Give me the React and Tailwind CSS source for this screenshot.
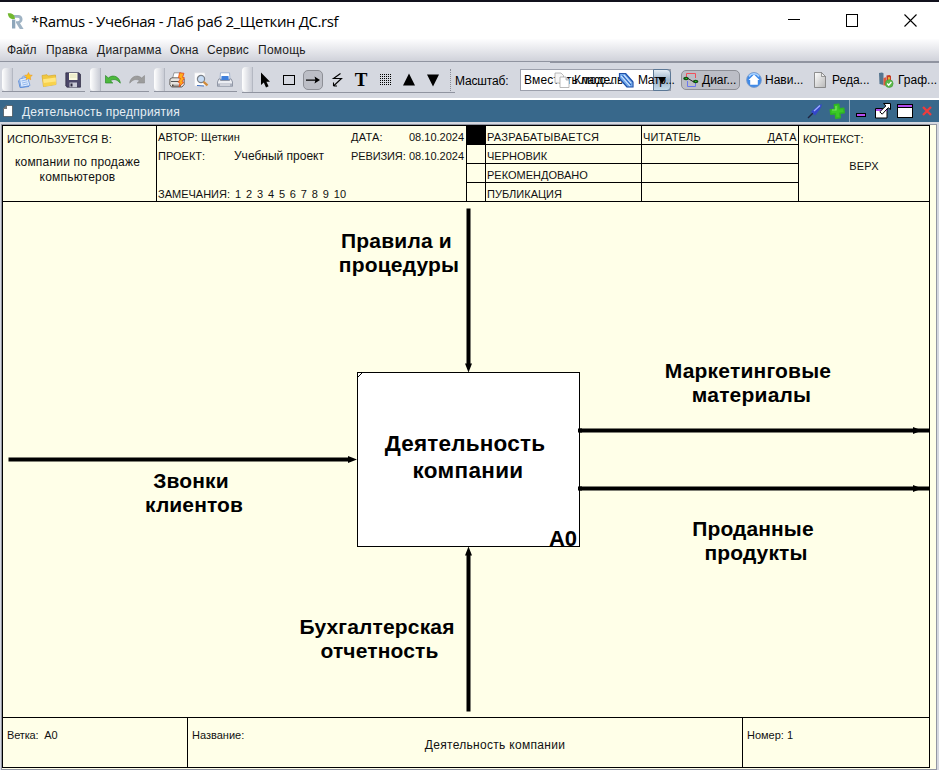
import React from "react";

const Icon = ({ w = 16, h = 16, className = "", children }) => (
  <svg width={w} height={h} viewBox={`0 0 ${w} ${h}`} className={`shrink-0 ${className}`}>
    {children}
  </svg>
);

const crisp = { shapeRendering: "crispEdges" };

/* ---------- title bar ---------- */

function RamusLogo() {
  return (
    <Icon w={18} h={18} className="ml-[7px]">
      <path d="M6 3h5.500a4.300 4.300 0 0 1 1.500 8.200l3.600 5.800h-3.800L9 10.800V9.200h2a1.700 1.700 0 0 0 0-3.400H8z" fill="#9fb3c4" />
      <path d="M5 7.500h3.300v9H5z" fill="#8ea6ba" />
      <path d="M.8 1.200C4.500.8 7.800 2 8 6.800 4.500 7.800 1.300 6.300.8 1.200z" fill="#72b830" />
    </Icon>
  );
}

function TitleBar() {
  return (
    <div className="flex h-[37px] items-center bg-white">
      <RamusLogo />
      <span className="ml-[6px] w-[600px] font-['Open_Sans','Noto_Sans',sans-serif] text-[15px] leading-5 tracking-[-0.4px] text-black">
        *Ramus - Учебная - Лаб раб 2_Щеткин ДС.rsf
      </span>
      <div className="ml-auto flex items-center gap-[46px] pr-[22px]">
        <Icon w={12} h={13}><path d="M0 5.500h12" stroke="#000" {...crisp} /></Icon>
        <Icon w={12} h={13}><path d="M.5.5h11v11.500H.5z" fill="none" stroke="#000" {...crisp} /></Icon>
        <Icon w={13} h={13}><path d="M.5.5l12 12M12.500.5l-12 12" stroke="#000" strokeWidth="1.100" /></Icon>
      </div>
    </div>
  );
}

/* ---------- menu ---------- */

function MenuBar() {
  return (
    <div className="flex h-[23px] items-center border-b border-[#9094a0] bg-linear-to-b from-[#fdfdfe] to-[#d0d2da] pl-[7px] text-xs leading-4 text-[#1c1c1c]">
      <span className="w-[39px]">Файл</span>
      <span className="w-[51px] tracking-[0.2px]">Правка</span>
      <span className="w-[73px] tracking-[0.25px]">Диаграмма</span>
      <span className="w-[37px] tracking-[0.2px]">Окна</span>
      <span className="w-[51px] tracking-[0.15px]">Сервис</span>
      <span className="tracking-[0.25px]">Помощь</span>
    </div>
  );
}

/* ---------- toolbar icons ---------- */

const NewIcon = () => (
  <Icon>
    <path d="M2.500 7l8-2 2.500 8.500-9 2z" fill="#dcebff" stroke="#7fa6e0" />
    <path d="M1.500 8.500l1.500 7 9-1" fill="none" stroke="#5d8edb" />
    <path d="M4.500 9l5.500-1.200M5 11l5.500-1.200M5.500 13l5.500-1.200" stroke="#8db2ea" strokeWidth=".9" />
    <path d="M5 6.500c0-3 3-3 3.500-.8" fill="none" stroke="#6f9ee6" />
    <path d="M11.500.5l1 2.400 2.800.4-2 1.800.4 2.600-2.300-1.200-2.400 1.200.5-2.600-1.900-1.800 2.700-.4z" fill="#ffc41f" stroke="#e8901c" strokeWidth=".5" />
  </Icon>
);
const FolderIcon = () => (
  <Icon>
    <path d="M1 3.500l5-.8 1.200 1.300 7.300-1 .5 9.500-12.500 2z" fill="#f0c840" stroke="#d9a928" strokeWidth=".7" />
    <path d="M2 7.200l12.800-1.700.2 6.800-12 2z" fill="#ffe680" />
    <path d="M2.500 11l12.300-1.500.2 3-12.300 2z" fill="#f8d24c" />
  </Icon>
);
const SaveIcon = () => (
  <Icon>
    <path d="M.8.800h13l1.700 1.500v12.900H2L.8 14z" fill="#4a4668" stroke="#2c2940" strokeWidth=".7" />
    <path d="M4 1h8.500v7H4z" fill="#fbfade" />
    <path d="M5 3h6.500M5 5h6.500" stroke="#dad9b0" strokeWidth=".8" />
    <path d="M4.500 10.500h7.500v4.700H4.500z" fill="#c9c9d6" />
    <path d="M5.500 11.500h2v3h-2z" fill="#2c2940" />
  </Icon>
);
const UndoIcon = () => (
  <Icon>
    <path d="M.5 3.500v7.500h7.300L5.500 8.800c3-2.300 6.500-1.500 9.800 2.400C15 5.500 8.500 1.500 3.300 6z" fill="#4cb93c" stroke="#2d8a2b" strokeWidth=".7" />
  </Icon>
);
const RedoIcon = () => (
  <Icon>
    <path d="M15.500 3.500v7.500H8.200l2.300-2.200C7.500 6.500 4 7.300.7 11.200 1 5.500 7.500 1.500 12.700 6z" fill="#9c9c9c" stroke="#8a8a8a" strokeWidth=".6" />
  </Icon>
);
const PrintBoltIcon = () => (
  <Icon>
    <path d="M5 .8h7l-1 6H3.500z" fill="#fff" stroke="#777" strokeWidth=".7" />
    <path d="M1 7l2-1.200h10.500L15.200 7v5.500L13 15H2.500L.8 12.500z" fill="#e6e3de" stroke="#4a4540" strokeWidth=".8" />
    <path d="M2 9.500h9" stroke="#555" />
    <path d="M3 12.500h9v2H3z" fill="#4a4038" />
    <path d="M4.500 12.500h6v1h-6z" fill="#fff" />
    <path d="M10.500.8l4.500.5-1.500 4 2 .5-2.500 4 1.800.5-4.800 4.500 1-4-1.700-.5L11.500 6.500l-2-.7z" fill="#ffae1a" stroke="#e5431d" strokeWidth=".8" />
  </Icon>
);
const PreviewIcon = () => (
  <Icon>
    <path d="M1.500.8h10l.5.7V14H1.500z" fill="#fdfdfd" stroke="#dcdde2" strokeWidth=".6" />
    <circle cx="8" cy="7" r="3.600" fill="#c6dcf5" stroke="#7a8088" strokeWidth="1.200" />
    <path d="M10.500 9.800l4 3.500" stroke="#d08a3a" strokeWidth="2.200" />
    <path d="M4 13.500l7 .5" stroke="#3d6fc0" />
  </Icon>
);
const PrintIcon = () => (
  <Icon>
    <path d="M3.500.8h9l.5 7H3z" fill="#fff" stroke="#8fa6c8" strokeWidth=".8" />
    <path d="M4.500 4h7l.3 4H4.200z" fill="#3f80dc" />
    <path d="M1.800 7h1.700v1.500h9V7h1.700l1.300 3v4.300H.5V10z" fill="#eceef3" stroke="#7c8494" strokeWidth=".8" />
    <path d="M1 11.500h14v3H1z" fill="#a9afbd" />
    <path d="M3 13h10" stroke="#f5f5f8" />
  </Icon>
);
const CursorIcon = () => (
  <Icon><path d="M4 .5v12.500l2.800-2.600L9 15.500l2.600-1.200-2.200-4.600H13z" fill="#000" /></Icon>
);
const RectIcon = () => (
  <Icon><path d="M2.500 3.500h11v9h-11z" fill="none" stroke="#000" {...crisp} /></Icon>
);
const ArrowIcon = () => (
  <Icon><path d="M1 7.500h10v1.200H1zM9.500 4.500L15 8l-5.500 3.600L10.500 8z" fill="#000" /></Icon>
);
const BoltIcon = () => (
  <Icon><path d="M11.500 1.500L4.500 6.500h8L4.500 14M4.500 14v-3.500M4.500 14h3.500" fill="none" stroke="#000" strokeWidth="1.100" /></Icon>
);
const GridIcon = () => (
  <Icon>
    {[3, 5, 7, 9, 11, 13].map((y) => (
      <path key={y} d={`M3 ${y - 0.5}h11`} stroke="#000" strokeDasharray="1 1" {...crisp} />
    ))}
  </Icon>
);
const UpIcon = () => <Icon><path d="M8 1.500l6 12H2z" fill="#000" /></Icon>;
const DownIcon = () => <Icon><path d="M2 2.500h12l-6 12z" fill="#000" /></Icon>;

const Cell = ({ children }) => <span className="flex w-6 justify-center self-start pt-[4px]">{children}</span>;
const Handle = () => (
  <span className="w-[11px] self-stretch rounded-l-[4px] border-r border-[#b4b8c2] bg-linear-to-r from-white to-[#c9ccd5]" />
);
const Group = ({ children }) => (
  <div className="flex h-6 items-center border-b border-[#9094a0]">
    <Handle />
    {children}
  </div>
);

function PagesIcon() {
  return (
    <Icon w={16} h={16}>
      <path d="M1 1h6l2.500 2.500V11H1z" fill="#f6f6f6" stroke="#a8a8a8" strokeWidth=".8" />
      <path d="M6 5h6l3 3v7.500H6z" fill="#fff" stroke="#a8a8a8" strokeWidth=".8" />
      <path d="M12 5v3h3" fill="#ddd" stroke="#a8a8a8" strokeWidth=".8" />
    </Icon>
  );
}
function ClipIcon() {
  return (
    <Icon w={16} h={16}>
      <path d="M1 1.500l7-.5 7 8-.5 6-6 .3L1 7z" fill="#6fa8ea" />
      <path d="M1.500 6.500v-5h6l7.500 8.500v5h-6z" fill="none" stroke="#1f4fa8" strokeWidth="1.200" />
      <path d="M3 4l9 10M6 3l7 8" stroke="#dbeaff" strokeWidth="1.100" />
      <path d="M4.500 3.500l8.500 9.500" stroke="#2458b8" />
    </Icon>
  );
}
function SchemeIcon() {
  return (
    <Icon w={16} h={16}>
      <path d="M3.500 5V1.500h9V6" fill="none" stroke="#f0505a" />
      <path d="M12.500 10v4.500h-8V9" fill="none" stroke="#6a78f0" />
      <path d="M5 6.500l5 3" stroke="#222" />
      <ellipse cx="3" cy="6.500" rx="2.800" ry="1.700" fill="#124d12" />
      <ellipse cx="12.600" cy="9.500" rx="2.800" ry="1.700" fill="#124d12" />
      <path d="M2.500 6.500h1.500M12 9.500h1.500" stroke="#27d427" />
    </Icon>
  );
}
function HomeIcon() {
  return (
    <Icon w={16} h={16}>
      <circle cx="8" cy="8" r="7.400" fill="#3f8ae8" stroke="#7d9cc8" strokeWidth=".9" />
      <path d="M3 4.500a6 6 0 0 1 10 0" fill="none" stroke="#a9d2ff" strokeWidth="1.500" />
      <path d="M8 2.500L13.500 8h-1.700v4.700H4.200V8H2.500z" fill="#fff" />
    </Icon>
  );
}
function SheetIcon() {
  return (
    <Icon w={14} h={16}>
      <defs>
        <linearGradient id="sheet" x1="0" x2="1" y1="0" y2="1">
          <stop offset="0" stopColor="#fff" /><stop offset="1" stopColor="#b8b8b8" />
        </linearGradient>
      </defs>
      <path d="M1.500.5h7l4 4v11h-11z" fill="url(#sheet)" stroke="#777" strokeWidth=".8" />
      <path d="M8.500.5v4h4z" fill="#eee" stroke="#777" strokeWidth=".7" />
    </Icon>
  );
}
function ChartIcon() {
  return (
    <Icon w={16} h={16}>
      <path d="M1 1l3-.5 1.500.8V13L1.500 12z" fill="#55758f" />
      <path d="M5.500 6l2.500-.8V13.500H5.500z" fill="#e05a3a" />
      <path d="M8.500 3.500l3-.6 1.500 1V10l-4.500 3z" fill="#c63a24" />
      <path d="M10 5l2 .2v4l-2 .5z" fill="#f0a838" />
      <circle cx="11.200" cy="11.600" r="3.900" fill="#5cb848" stroke="#3f9a35" strokeWidth=".6" />
      <path d="M9.200 11.500l1.500 1.700 2.700-3.200" fill="none" stroke="#fff" strokeWidth="1.300" />
    </Icon>
  );
}

function ToolBar() {
  return (
    <div className="relative flex h-9 items-start bg-[#d5d8e0] text-xs leading-4 text-black">
      <div className="flex h-9 items-start gap-[5px] pl-[2px] pt-[6px]">
        <Group>
          <Cell><NewIcon /></Cell>
          <Cell><FolderIcon /></Cell>
          <Cell><SaveIcon /></Cell>
        </Group>
        <Group>
          <Cell><UndoIcon /></Cell>
          <Cell><RedoIcon /></Cell>
        </Group>
        <Group>
          <Cell><PrintBoltIcon /></Cell>
          <Cell><PreviewIcon /></Cell>
          <Cell><PrintIcon /></Cell>
        </Group>
        <div className="-mt-px flex h-[26px] w-[213px] border-b border-[#9094a0]">
          <Handle />
          <div className="mt-px flex h-6 items-start">
            <Cell><CursorIcon /></Cell>
            <Cell><RectIcon /></Cell>
            <span className="mx-[2px] mt-[2px] flex h-5 w-5 items-center justify-center rounded-[5px] border border-[#8d8f96] bg-[#bcbec6]"><ArrowIcon /></span>
            <Cell><BoltIcon /></Cell>
            <Cell><b className="font-['Liberation_Serif',serif] text-[19px] leading-4">T</b></Cell>
            <Cell><GridIcon /></Cell>
            <Cell><UpIcon /></Cell>
            <Cell><DownIcon /></Cell>
            <span className="ml-[5px] mt-px h-[22px] border-l border-dotted border-[#8b8e98]" />
          </div>
        </div>
      </div>
      <span className="mt-[11px] w-[65px] tracking-[-0.15px]">Масштаб:</span>
      <div className="mt-[7px] flex h-[22px] w-[151px] items-center border border-[#9ca0ac] bg-white pl-[3px]">
        <span className="w-[129px] whitespace-nowrap tracking-[0.15px]">Вместить модель</span>
        <span className="-mr-px flex h-[22px] w-[18px] items-center justify-center rounded-r-[4px] border border-[#5c7896] bg-linear-to-b from-[#e4edf5] via-[#9bb3c9] to-[#c5dbea]">
          <svg width="8" height="8"><path d="M0 1h8L4 8z" fill="#000" /></svg>
        </span>
      </div>

      {/* view switcher floats over the zoom selector */}
      <div className="absolute left-[550px] top-0 flex h-[29px] w-[389px] items-center whitespace-nowrap border-t border-[#9094a0] pl-[4px] pt-[6px]">
        <PagesIcon />
        <span className="ml-[4px] w-[44px] tracking-[-0.3px]">Класс...</span>
        <ClipIcon />
        <span className="ml-[4px] w-[43px] tracking-[-0.3px]">Матр...</span>
        <span className="flex h-5 w-[59px] items-center gap-[3px] rounded-[5px] border border-[#8d8f96] bg-[#bcbec6] pl-[1px]">
          <SchemeIcon />Диаг...
        </span>
        <span className="ml-[6px] flex w-[67px] items-center gap-[3px]"><HomeIcon />Нави...</span>
        <span className="flex w-[65px] items-center gap-[5px]"><SheetIcon />Реда...</span>
        <span className="flex items-center gap-[4px]"><ChartIcon />Граф...</span>
      </div>
    </div>
  );
}

/* ---------- diagram window ---------- */

function WindowHeader() {
  return (
    <div className="flex h-[22px] items-center bg-[#38688b] text-xs leading-4 text-[#e6eef4]">
      <Icon w={10} h={12} className="ml-[3px]"><path d="M3.500.5h6v11h-9v-8z" fill="#fff" stroke="#222" strokeWidth=".5" /><path d="M0 4l4-4v4z" fill="#777" /></Icon>
      <span className="ml-[9px] pt-px tracking-[0.24px]">Деятельность предприятия</span>
      <div className="ml-auto flex h-full items-center">
        <Icon w={16} h={16}>
          <path d="M1 15l5-5" stroke="#1d2440" strokeWidth="1.500" />
          <path d="M4 8.500l4 4 2-2.500 4-5.500 1-3.500-3.500 1.500-5 4z" fill="#3447c9" />
          <path d="M7 8l6-5.500" stroke="#9fb0ff" strokeWidth="1.300" />
        </Icon>
        <Icon w={16} h={16} className="ml-[6px]">
          <path d="M6 1.500h4.500V6H15v4.500h-4.500V15H6v-4.500H1.500V6H6z" fill="#3bc926" stroke="#2fb524" strokeWidth="1.500" strokeLinejoin="round" transform="rotate(-6 8 8)" />
          <path d="M7 3v4H3" fill="none" stroke="#7de462" strokeWidth="1.200" />
        </Icon>
        <span className="ml-[4px] h-full w-px bg-[#8fa9bd]" />
        <Icon w={12} h={16} className="ml-[6px]"><path d="M.5 10.500h9v3h-9z" fill="#b44cf0" stroke="#000" {...crisp} /></Icon>
        <Icon w={17} h={16} className="ml-[7px]">
          <path d="M.5 5.500h11.500v9.500H.5z" fill="#fff" stroke="#000" />
          <path d="M1 6h11v2H1z" fill="#b44cf0" />
          <path d="M8.500.5h7v6l-2.300-1.800-6 6.500-2.400-2.400 6.200-6z" fill="#fff" stroke="#000" />
        </Icon>
        <Icon w={16} h={16} className="ml-[5px]">
          <path d="M.5 1.500h15v12.500H.5z" fill="#fff" stroke="#000" {...crisp} />
          <path d="M1 2h14v2H1z" fill="#b44cf0" {...crisp} /><path d="M1 4.500h14" stroke="#000" {...crisp} />
        </Icon>
        <Icon w={10} h={12} className="ml-[9px] mr-[7px]"><path d="M1 2l8 8M9 2l-8 8" stroke="#f03c3c" strokeWidth="2.300" /></Icon>
      </div>
    </div>
  );
}

function StatusRow({ label, active }) {
  return (
    <div className="flex h-[19px] border-b border-black last:border-b-0">
      <span className={active ? "w-[19px] border-r border-black bg-black" : "w-[19px] border-r border-black"} />
      <span className={active ? "w-[156px] border-r border-black pl-[1px] pt-[4px] tracking-[0.25px]" : "w-[156px] border-r border-black pl-[1px] pt-[4px]"}>{label}</span>
      <span className="flex w-[156px] justify-between pl-[1px] pr-[1px] pt-[4px]">
        {active && (<><span className="tracking-[0.15px]">ЧИТАТЕЛЬ</span><span className="tracking-[0.5px]">ДАТА</span></>)}
      </span>
    </div>
  );
}

function SheetHeader() {
  return (
    <div className="flex h-[76px] border-b border-black text-[11px] leading-[14px] text-[#111]">
      <div className="w-[154px] border-r border-black pl-[4px] pt-[6px]">
        <div className="tracking-[0.1px]">ИСПОЛЬЗУЕТСЯ В:</div>
        <div className="mt-[9px] w-[141px] text-center text-xs leading-[15px] tracking-[0.2px]">
          компании по продаже<br />компьютеров
        </div>
      </div>
      <div className="w-[310px] border-r border-black pl-[1px]">
        <div className="mt-[4px] flex h-[19px]">
          <span className="w-[193px] tracking-[0.15px]">АВТОР: Щеткин</span>
          <span className="w-[58px] tracking-[0.25px]">ДАТА:</span>
          <span>08.10.2024</span>
        </div>
        <div className="flex h-[38px]">
          <span className="w-[76px]">ПРОЕКТ:</span>
          <span className="w-[117px] text-xs leading-[15px]">Учебный проект</span>
          <span className="w-[58px] whitespace-nowrap tracking-[-0.1px]">РЕВИЗИЯ:</span>
          <span>08.10.2024</span>
        </div>
        <div className="flex">
          <span className="w-[77px]">ЗАМЕЧАНИЯ:</span>
          <span className="[word-spacing:1.8px]">1 2 3 4 5 6 7 8 9 10</span>
        </div>
      </div>
      <div className="w-[332px] border-r border-black">
        <StatusRow label="РАЗРАБАТЫВАЕТСЯ" active />
        <StatusRow label="ЧЕРНОВИК" />
        <StatusRow label="РЕКОМЕНДОВАНО" />
        <StatusRow label="ПУБЛИКАЦИЯ" />
      </div>
      <div className="flex-1 pl-[4px] pt-[6px]">
        <div>КОНТЕКСТ:</div>
        <div className="mt-[13px] w-[122px] text-center tracking-[0.2px]">ВЕРХ</div>
      </div>
    </div>
  );
}

/* Canvas origin sits just under the sheet header */
function Diagram() {
  return (
    <div className="relative h-[515px] font-bold text-black">
      <svg width="927" height="515" viewBox="3 202 927 515" className="absolute left-0 top-0">
        <g stroke="#000" strokeWidth="4">
          <path d="M468.500 208.500V366M468.500 711.500V553M8.500 459.500H349M578 430.500H930M578 488.500H930" />
        </g>
        <path d="M465 363.500h7l-3.500 9zM465 555.500h7l-3.500-9zM348 456v7l9-3.500zM913 427v7l9-3.500zM913 485v7l9-3.500z" fill="#000" />
      </svg>
      <div className="absolute left-[354px] top-[170px] flex h-[175px] w-[223px] flex-col border border-black bg-white">
        <svg width="6" height="6" className="absolute left-0 top-0"><path d="M0 4L4 0" stroke="#000" /></svg>
        <div className="mt-[57px] w-[214px] text-center text-[22.5px] leading-[27px] tracking-[0.2px]">Деятельность</div>
        <div className="w-[220px] text-center text-[22.5px] leading-[27px] tracking-[0.3px]">компании</div>
        <div className="-mb-[2px] mt-auto pr-[2px] text-right text-[22px] leading-[18px]">A0</div>
      </div>
      <svg width="4" height="64" className="absolute left-[575px] top-[226px]"><path d="M0 2.500h4M0 60.500h4" stroke="#000" strokeWidth="4" /></svg>
      <div className="absolute left-[323px] top-[27px] w-[146px] text-center text-[21px] leading-6 tracking-[0.2px]"><div className="-ml-[5px]">Правила и</div><div>процедуры</div></div>
      <div className="absolute left-[642px] top-[157px] w-[206px] text-center text-[21px] leading-6 tracking-[0.2px]"><div>Маркетинговые</div><div className="ml-[7px]">материалы</div></div>
      <div className="absolute left-[670px] top-[315px] w-[160px] text-center text-[21px] leading-6 tracking-[0.1px]"><div>Проданные</div><div className="ml-[6px]">продукты</div></div>
      <div className="absolute left-[121px] top-[267px] w-[140px] text-center text-[21px] leading-6 tracking-[0.1px]"><div className="-ml-[6px]">Звонки</div><div>клиентов</div></div>
      <div className="absolute left-[274px] top-[413px] w-[200px] text-center text-[21px] leading-6 tracking-[0.15px]"><div>Бухгалтерская</div><div className="ml-[5px]">отчетность</div></div>
    </div>
  );
}

function SheetFooter() {
  return (
    <div className="flex h-[51px] border-y border-black text-[11px] leading-[14px] text-[#111]">
      <div className="w-[185px] border-r border-black pl-[4px] pt-[10px] tracking-[-0.15px]">Ветка: &nbsp;A0</div>
      <div className="w-[555px] border-r border-black pl-[4px] pt-[10px]">
        <div className="h-[9px]">Название:</div>
        <div className="w-[606px] text-center text-xs leading-[16px] tracking-[0.3px]">Деятельность компании</div>
      </div>
      <div className="pl-[4px] pt-[10px]">Номер: 1</div>
    </div>
  );
}

export default function App() {
  return (
    <div className="flex h-[770px] w-[939px] flex-col overflow-hidden bg-[#d5d8e0] font-['Liberation_Sans',Arial,sans-serif]">
      <div className="h-[2px] bg-[#11111d]" />
      <TitleBar />
      <MenuBar />
      <ToolBar />
      <div className="h-[2px] bg-white" />
      <WindowHeader />
      <div className="ml-px mt-[2px] h-[646px] w-[936px] border border-[#9296a2] bg-[#ffffe8]">
        <div className="h-[643px] w-[928px] border-x border-t border-black">
          <SheetHeader />
          <Diagram />
          <SheetFooter />
        </div>
      </div>
    </div>
  );
}
